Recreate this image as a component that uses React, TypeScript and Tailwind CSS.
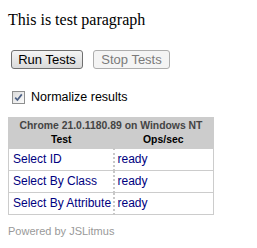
import React from 'react';

const rows = ['Select ID', 'Select By Class', 'Select By Attribute'];

export default function App() {
  return (
    <div className="w-[257px] h-[248px] bg-white font-['Liberation_Sans',Arial,sans-serif] text-black">
      <p className="pt-[11px] pl-2 font-['Liberation_Serif',serif] text-[16px] leading-[18px]">
        This is test paragraph
      </p>

      <div className="mt-[21px] flex gap-[10px] pl-[11px]">
        <button className="w-[72px] h-[19px] rounded-[3px] border border-[#707070] bg-linear-to-b from-[#f4f4f4] to-[#dadada] text-[13px] leading-none text-black">
          Run Tests
        </button>
        <button
          disabled
          className="w-[77px] h-[19px] rounded-[3px] border border-[#adadad] bg-[#f4f4f4] text-[13px] leading-none text-[#7a7a7a]"
        >
          Stop Tests
        </button>
      </div>

      <label className="mt-[22px] flex h-[13px] items-center pl-3">
        <span className="flex h-[13px] w-[13px] items-center justify-center border border-[#8e8f8f] bg-linear-to-br from-[#dcdcdc] to-[#fbfbfb]">
          <svg width="9" height="9" viewBox="0 0 9 9">
            <path d="M1.2 4.6 L3.4 7 L7.8 1.4" fill="none" stroke="#4d6185" strokeWidth="1.7" />
          </svg>
        </span>
        <span className="ml-[6px] text-[12.5px] leading-none">Normalize results</span>
      </label>

      <table className="ml-2 mt-[13px] w-[206px] table-fixed border-collapse border border-[#cccccc]">
        <colgroup>
          <col className="w-[105px]" />
          <col />
        </colgroup>
        <thead className="bg-[#cccccc]">
          <tr className="h-[15px]">
            <th colSpan={2} className="p-0 pt-[1px] text-center text-[10.4px] leading-[14px] font-bold text-[#444444] whitespace-nowrap">
              Chrome 21.0.1180.89 on Windows NT
            </th>
          </tr>
          <tr className="h-[15px]">
            <th className="p-0 text-center text-[10.4px] leading-[14px] font-bold">Test</th>
            <th className="p-0 text-center text-[10.4px] leading-[14px] font-bold">Ops/sec</th>
          </tr>
        </thead>
        <tbody>
          {rows.map((r) => (
            <tr key={r} className="h-[22px] border-t border-[#cccccc]">
              <td className="px-1 py-0 text-[12px] text-[#000080] leading-[21px] whitespace-nowrap">{r}</td>
              <td className="border-l-2 border-dotted border-[#c8c8c8] px-[3px] py-0 text-[12px] text-[#000080] leading-[21px]">
                ready
              </td>
            </tr>
          ))}
        </tbody>
      </table>

      <div className="mt-[10px] pl-2 text-[11px] leading-[13px] text-[#999999]">Powered by JSLitmus</div>
    </div>
  );
}
